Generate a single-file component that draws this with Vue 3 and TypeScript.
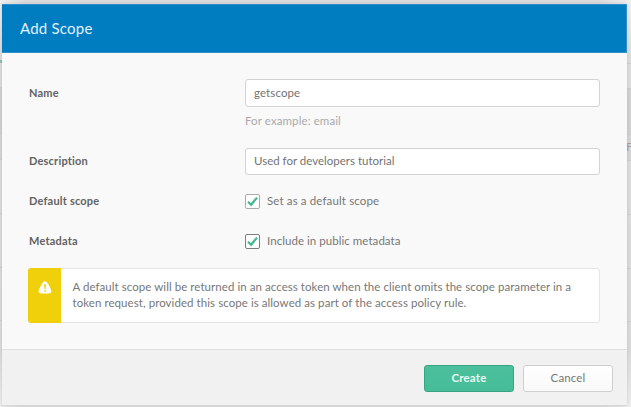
<script setup lang="ts">
import { ref } from 'vue'

const name = ref('getscope')
const description = ref('Used for developers tutorial')
const isDefault = ref(true)
const inMetadata = ref(true)
</script>

<template>
  <div class="page">
    <div class="backdrop">
      <div class="strip left">
        <i class="r1"></i><i class="r2 accent"></i><i class="r3"></i><i class="r4"></i><i class="r5"></i><i class="r6"></i><i class="r7"></i>
      </div>
      <div class="strip right">
        <i class="r1"></i><i class="r2"></i><i class="r3"></i><i class="r4"><span>F</span></i><i class="r5"></i><i class="r6"></i><i class="r7"></i>
      </div>
    </div>
    <section class="modal" role="dialog">
      <header class="head"><h1>Add Scope</h1></header>
      <form class="body" @submit.prevent>
        <div class="row name-row">
          <label class="name" for="name">Name</label>
          <div class="field">
            <input id="name" v-model="name" class="input tall" type="text" />
            <p class="hint">For example: email</p>
          </div>
        </div>
        <div class="row desc-row">
          <label class="desc" for="description">Description</label>
          <div class="field">
            <input id="description" v-model="description" class="input" type="text" />
          </div>
        </div>
        <div class="row check-row">
          <span class="label">Default scope</span>
          <div class="field check" @click="isDefault = !isDefault">
            <span class="box">
              <svg v-if="isDefault" viewBox="0 0 15 15"><path d="M3 7.8 L6.2 10.8 L12 3.6" /></svg>
            </span>
            <span class="opt1">Set as a default scope</span>
          </div>
        </div>
        <div class="row check-row">
          <span class="label">Metadata</span>
          <div class="field check" @click="inMetadata = !inMetadata">
            <span class="box focus">
              <svg v-if="inMetadata" viewBox="0 0 15 15"><path d="M3 7.8 L6.2 10.8 L12 3.6" /></svg>
            </span>
            <span class="opt2">Include in public metadata</span>
          </div>
        </div>
        <div class="notice">
          <div class="flag">
            <svg viewBox="0 0 14 13">
              <path class="sign" d="M7 .3C8.3 .3 9.1 1.3 10 2.8C11.4 5 12.7 7.6 13.3 9.7C13.8 11.4 13 12 11.5 12.2C8.6 12.6 5.4 12.6 2.5 12.2C1 12 .2 11.4 .7 9.7C1.3 7.6 2.6 5 4 2.8C4.9 1.3 5.7 .3 7 .3Z" />
              <path class="mark" d="M6.1 3.3H7.9L7.6 8H6.4Z" />
              <circle class="mark" cx="7" cy="9.9" r=".9" />
            </svg>
          </div>
          <p><span class="line1">A default scope will be returned in an access token when the client omits the scope parameter in a</span><br /><span class="line2">token request, provided this scope is allowed as part of the access policy rule.</span></p>
        </div>
      </form>
      <footer class="foot">
        <button class="btn primary" type="button">Create</button>
        <button class="btn" type="button">Cancel</button>
      </footer>
    </section>
  </div>
</template>

<style>
body { margin: 0; overflow: hidden; }
</style>

<style scoped>
* { box-sizing: border-box; }
.page {
  position: relative;
  width: 631px;
  height: 407px;
  overflow: hidden;
  padding: 4px 4px 0 2px;
  background: linear-gradient(90deg, #f0f0f0 0, #dcdcdc 24px, #dcdcdc 600px, #efefef 631px);
  font-family: Lato, "Open Sans", sans-serif;
  font-size: 11.5px;
  color: #777;
}
.backdrop { position: absolute; inset: 0; display: flex; justify-content: space-between; }
.strip { display: flex; flex-direction: column; width: 5px; background: linear-gradient(#efefef, #dedede 50px, #dbdbdb 350px, #eee); }
.strip i { display: block; border-bottom: 1px solid #cfcfcf; font-style: normal; }
.strip .r1 { height: 64px; }
.strip .r2 { height: 25px; }
.strip .r3 { height: 46px; background: #d2d2d2; }
.strip .r4 { height: 26px; background: #d5d5d5; overflow: hidden; padding-top: 5px; }
.strip .r4 span { display: block; font-size: 11px; line-height: 14px; color: #a99f9f; }
.strip .r5 { height: 54px; }
.strip .r6 { height: 54px; }
.strip .r7 { height: 53px; }
.left .r1 { height: 60px; border: 0; }
.left .accent { height: 28px; border-top: 3px solid #8fbfae; }
.modal {
  position: relative;
  width: 625px;
  height: 402px;
  display: flex;
  flex-direction: column;
  background: #f9f9f9;
  border-bottom: 1px solid #d8d8d8;
  box-shadow: 0 0 4px rgba(0, 0, 0, .12);
}
.head {
  height: 49px;
  display: flex;
  align-items: center;
  padding: 0 0 2px 18px;
  background: #007dc1;
  border: 1px solid #318fca;
  border-width: 1px 1px 1px 0;
}
h1 { margin: 0; font-size: 15px; line-height: 20px; font-weight: 400; letter-spacing: .22px; color: #e0f0fa; }
.body { flex: 1; padding: 26px 27px 0 27px; }
.row { display: flex; align-items: flex-start; }
.row > label, .label { width: 216px; flex: none; line-height: 16px; font-weight: 700; font-size: 11px; letter-spacing: .2px; color: #636363; }
.field { flex: 1; }
.name-row { height: 69px; }
.name-row > label { margin-top: 6px; }
.desc-row > label { margin-top: 5px; }
.desc-row { height: 33px; }
.input {
  display: block;
  width: 355px;
  height: 27px;
  padding: 0 8px 2px;
  border: 1px solid #d3d3d3;
  border-radius: 3px;
  background: #fff;
  outline: 0;
  font: inherit;
  color: #737373;
}
.tall { height: 28px; letter-spacing: .1px; }
.hint { margin: 6px 0 0; line-height: 16px; letter-spacing: .1px; color: #aaa; }
.check-row { height: 40px; align-items: center; }
.check-row .label { margin-bottom: 1px; }
.check { display: flex; align-items: center; gap: 7px; line-height: 16px; }
.opt1, .opt2 { margin-bottom: 1px; }
.opt1 { letter-spacing: .13px; }
.opt2 { letter-spacing: .05px; }
.box { width: 15px; height: 15px; border: 1px solid #aaa; border-radius: 2px; background: #fff; display: flex; }
.box svg { width: 15px; height: 15px; margin: -1px; flex: none; }
.box path { fill: none; stroke: #43b893; stroke-width: 2.2; }
.box.focus { border-color: #7e7e7e; }
.notice {
  width: 572px;
  height: 55px;
  margin-top: 7px;
  margin-left: -1px;
  display: flex;
  border: 1px solid #e5e5e5;
  border-radius: 3px;
  background: #fff;
}
.flag { width: 33px; margin: -1px 0 -1px -1px; display: flex; justify-content: center; padding-top: 13px; background: #f0cf0b; border-radius: 3px 0 0 3px; }
.flag svg { width: 14px; height: 13px; }
.sign { fill: #fff; }
.mark { fill: #f0cf0b; }
.notice p { margin: 10px 0 0 11.5px; line-height: 16px; white-space: nowrap; }
.line1 { letter-spacing: .058px; }
.line2 { letter-spacing: .066px; }
.foot {
  height: 56px;
  display: flex;
  justify-content: flex-end;
  gap: 9px;
  padding: 15px 14px 0 0;
  background: #f1f1f1;
  border-top: 1px solid #dfdfdf;
}
.btn {
  width: 90px;
  height: 27px;
  padding: 0 0 2px;
  border: 1px solid #cfcfcf;
  border-radius: 3px;
  background: linear-gradient(#fff, #f9f9f9);
  font: inherit;
  letter-spacing: .15px;
  color: #777;
}
.primary { border-color: #36a680; background: linear-gradient(#4cbf9c, #46bd98); color: #e9fbf4; font-weight: 700; }
</style>
